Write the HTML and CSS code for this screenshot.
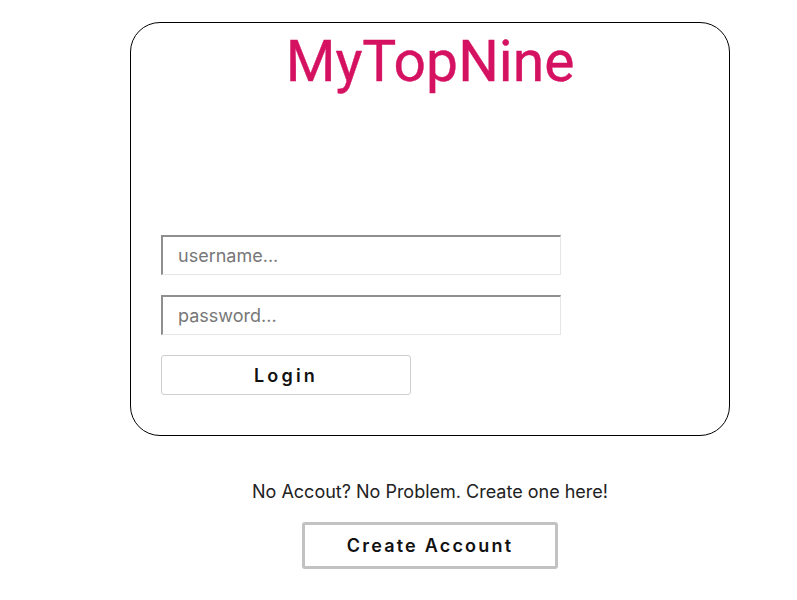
FILE: index.html
```html
<!DOCTYPE html>
<html>
<head>
<meta charset="utf-8">
<link rel="stylesheet" href="styles.css">
</head>
<body>
<div class="page">
  <form class="card">
    <h1 class="title">MyTopNine</h1>
    <input class="field" type="text" placeholder="username...">
    <input class="field" type="password" placeholder="password...">
    <button class="login" type="button">Login</button>
  </form>
  <p class="note">No Accout? No Problem. Create one here!</p>
  <button class="create" type="button">Create Account</button>
</div>
</body>
</html>
```
FILE: styles.css
```css
html, body {
  margin: 0;
  padding: 0;
  background: #fff;
}
body {
  font-family: Inter, "Liberation Sans", Arial, sans-serif;
  color: #222;
}
.page {
  width: 600px;
  margin-left: 130px;
  padding-top: 22px;
  display: flex;
  flex-direction: column;
  align-items: center;
}
.card {
  box-sizing: border-box;
  width: 600px;
  height: 414px;
  border: 1px solid #000;
  border-radius: 30px;
  padding: 0 30px;
  display: flex;
  flex-direction: column;
  align-items: flex-start;
}
.title {
  align-self: center;
  margin: 6px 0 0;
  font-family: Roboto, sans-serif;
  font-weight: 400;
  font-size: 57px;
  line-height: 66px;
  color: #d51261;
  -webkit-text-stroke: 0.4px #d51261;
}
.field {
  box-sizing: border-box;
  width: 400px;
  height: 40px;
  margin: 0 0 20px;
  padding: 0 15px;
  border-style: solid;
  border-width: 2px 1px 1px 2px;
  border-color: #8f8f8f #e6e6e6 #e6e6e6 #8f8f8f;
  font-family: Inter, "Liberation Sans", Arial, sans-serif;
  font-size: 18px;
  color: #222;
  background: #fff;
}
.field:first-of-type {
  margin-top: 140px;
}
.field::placeholder {
  color: #777;
}
.login {
  box-sizing: border-box;
  width: 250px;
  height: 40px;
  border: 1px solid #cfcfcf;
  border-radius: 3px;
  background: #fff;
  font-family: Inter, "Liberation Sans", Arial, sans-serif;
  font-weight: 600;
  font-size: 18px;
  letter-spacing: 3.2px;
  color: #111;
}
.note {
  margin: 45px 0 0;
  font-size: 18px;
  line-height: 22px;
  color: #222;
}
.create {
  box-sizing: border-box;
  margin-top: 19px;
  width: 256px;
  height: 47px;
  border: 3px solid #c2c2c2;
  border-radius: 3px;
  background: #fff;
  font-family: Inter, "Liberation Sans", Arial, sans-serif;
  font-weight: 600;
  font-size: 18px;
  letter-spacing: 2.2px;
  color: #111;
}
```
